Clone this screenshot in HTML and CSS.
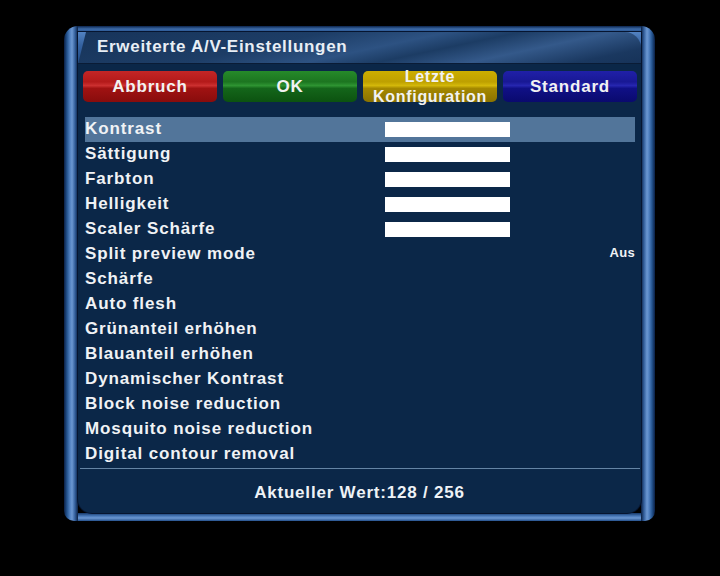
FILE: index.html
```html
<!DOCTYPE html>
<html lang="de">
<head>
<meta charset="utf-8">
<title>Erweiterte A/V-Einstellungen</title>
<link rel="stylesheet" href="styles.css">
</head>
<body>
<div class="frame">
  <div class="inner">
    <div class="head">
      <div class="title">Erweiterte A/V-Einstellungen</div>
    </div>
    <div class="buttons">
      <div class="btn red">Abbruch</div>
      <div class="btn green">OK</div>
      <div class="btn yellow two">Letzte<br>Konfiguration</div>
      <div class="btn blue">Standard</div>
    </div>
    <div class="list">
      <div class="row sel"><span class="label">Kontrast</span><span class="slider"></span></div>
      <div class="row"><span class="label">Sättigung</span><span class="slider"></span></div>
      <div class="row"><span class="label">Farbton</span><span class="slider"></span></div>
      <div class="row"><span class="label">Helligkeit</span><span class="slider"></span></div>
      <div class="row"><span class="label">Scaler Schärfe</span><span class="slider"></span></div>
      <div class="row"><span class="label">Split preview mode</span><span class="value">Aus</span></div>
      <div class="row"><span class="label">Schärfe</span></div>
      <div class="row"><span class="label">Auto flesh</span></div>
      <div class="row"><span class="label">Grünanteil erhöhen</span></div>
      <div class="row"><span class="label">Blauanteil erhöhen</span></div>
      <div class="row"><span class="label">Dynamischer Kontrast</span></div>
      <div class="row"><span class="label">Block noise reduction</span></div>
      <div class="row"><span class="label">Mosquito noise reduction</span></div>
      <div class="row"><span class="label">Digital contour removal</span></div>
    </div>
    <div class="sep"></div>
    <div class="footer">Aktueller Wert:128 / 256</div>
  </div>
</div>
</body>
</html>
```
FILE: styles.css
```css
html, body {
  margin: 0;
  padding: 0;
  background: #000;
}
body {
  width: 720px;
  height: 576px;
  overflow: hidden;
  font-family: "Liberation Sans", Arial, sans-serif;
  font-weight: bold;
  color: #eef2f6;
}
.frame {
  box-sizing: border-box;
  width: 591px;
  height: 495px;
  margin: 26px 0 0 64px;
  padding: 6px 14px 8px 14px;
  border-radius: 14px 14px 10px 10px;
  display: flex;
  flex-direction: column;
  background:
    linear-gradient(90deg, #0a1f45 0, #24548f 3px, #5282c2 6px, #6c98d2 8px, #335f9c 11px, #0a1f40 14px) left top / 14px 100% no-repeat,
    linear-gradient(90deg, #0a1f40 0, #335f9c 3px, #6c98d2 6px, #5282c2 8px, #24548f 11px, #0a1f45 14px) right top / 14px 100% no-repeat,
    linear-gradient(180deg, #163868 0, #4676b6 3px, #6c98d2 5px, #24508c 8px) left bottom / 100% 8px no-repeat,
    linear-gradient(180deg, #0b244c 0, #3c6aa8 3px, #28548e 6px) left top / 100% 6px no-repeat;
}
.inner {
  flex: 1;
  display: flex;
  flex-direction: column;
  background: #0b2748;
  border-radius: 0 0 14px 14px;
  box-shadow: 0 0 0 1px #061530;
}
.head {
  height: 32px;
  display: flex;
  background: linear-gradient(180deg, #5282c2 0, #3563a2 40%, #204a84 100%);
}
.title {
  flex: 1;
  display: flex;
  align-items: center;
  padding: 0 0 2px 19px;
  font-size: 17px;
  letter-spacing: 0.7px;
  color: #e8eef5;
  border-top-right-radius: 16px;
  clip-path: polygon(8px 0, 100% 0, 100% 100%, 0 100%);
  background:
    linear-gradient(168deg, #17345a 0%, #1d3d66 35%, #2d5282 52%, #1c3c64 62%, #34598a 75%, #1a3860 90%, #163258 100%);
  box-shadow: inset 0 -1px 0 #0a1c36;
}
.buttons {
  display: flex;
  gap: 6px;
  margin-top: 7px;
  padding-left: 5px;
}
.btn {
  width: 134px;
  height: 31px;
  border-radius: 5px;
  display: flex;
  align-items: center;
  justify-content: center;
  text-align: center;
  font-size: 17px;
  letter-spacing: 0.8px;
  color: #f2f2f2;
  padding-top: 1px;
  box-sizing: border-box;
}
.btn.two {
  font-size: 16px;
  line-height: 20px;
  letter-spacing: 0.7px;
  padding-top: 0;
}
.red {
  background: linear-gradient(180deg, #c42626 0%, #b41a1a 35%, #cc3030 47%, #a01212 56%, #880c0c 100%);
}
.green {
  background: linear-gradient(180deg, #268a2a 0%, #1c7520 35%, #2e9432 47%, #14661a 56%, #0c5210 100%);
}
.yellow {
  background: linear-gradient(180deg, #ccae00 0%, #bea000 35%, #d4b80a 47%, #a48800 56%, #8a7200 100%);
}
.blue {
  background: linear-gradient(180deg, #2020a8 0%, #181894 35%, #2626b0 47%, #101086 56%, #0a0a6e 100%);
}
.list {
  margin-top: 15px;
  padding: 0 6px 0 7px;
  display: flex;
  flex-direction: column;
}
.row {
  height: 25px;
  display: flex;
  align-items: center;
  font-size: 17px;
  letter-spacing: 0.88px;
  color: #f0f2f5;
}
.row.sel {
  background: #52759a;
}
.label {
  width: 300px;
  flex: none;
  padding-bottom: 1px;
}
.slider {
  width: 125px;
  height: 15px;
  background: #ffffff;
}
.value {
  margin-left: auto;
  font-size: 13px;
  letter-spacing: 0.3px;
  padding-bottom: 4px;
}
.sep {
  height: 1px;
  margin: 1px 1px 0 2px;
  background: #6584a4;
}
.footer {
  flex: 1;
  display: flex;
  align-items: center;
  justify-content: center;
  font-size: 17px;
  letter-spacing: 0.8px;
  padding-top: 4px;
  color: #eef2f6;
}
```
